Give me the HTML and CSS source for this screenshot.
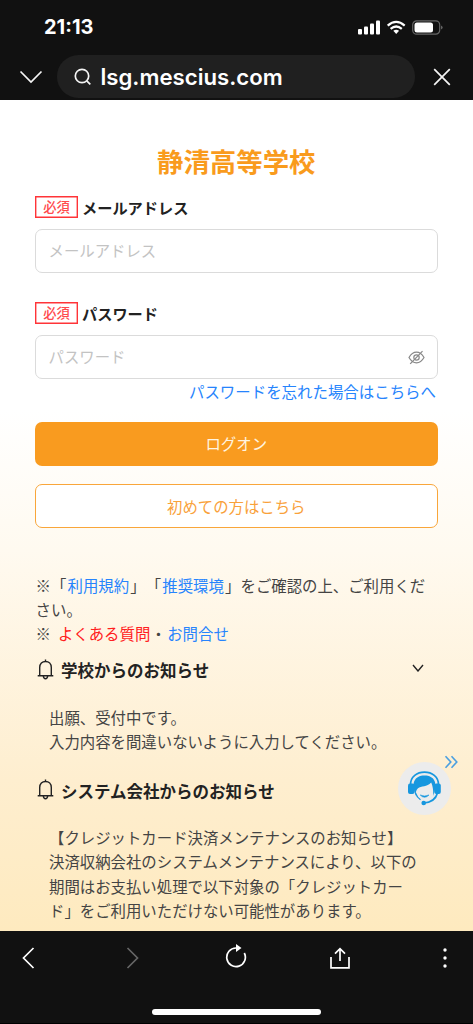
FILE: index.html
```html
<!DOCTYPE html>
<html lang="ja">
<head>
<meta charset="utf-8">
<meta name="viewport" content="width=device-width, initial-scale=1">
<title>静清高等学校</title>
<link rel="stylesheet" href="styles.css">
</head>
<body>
<div class="screen">
  <header class="browser-top">
    <div class="status">
      <span class="clock">21:13</span>
      <svg class="status-icons" width="86" height="16" viewBox="0 0 86 16">
        <g fill="#fff">
          <rect x="0" y="9" width="4" height="5.500" rx="1"/><rect x="6" y="6.500" width="4" height="8" rx="1"/><rect x="12" y="3.500" width="4" height="11" rx="1"/><rect x="18" y="0.500" width="4" height="14" rx="1"/>
          <path d="M35.300 10.800Q38.200 8.700 41.100 10.800L38.200 14Z"/>
          <rect x="56.500" y="2.500" width="18.500" height="10" rx="2.500"/>
        </g>
        <g fill="none" stroke="#fff" stroke-width="2.200"><path d="M29.700 5.600Q38.200-1.900 46.700 5.600"/><path d="M32.600 8.900Q38.200 4.100 43.800 8.900"/></g>
        <rect x="54.700" y=".8" width="27" height="13.400" rx="4" fill="none" stroke="#666" stroke-width="1.200"/>
        <path d="M83.200 5.500Q86 7.500 83.200 9.500Z" fill="#777"/>
      </svg>
    </div>
    <div class="address-row">
      <svg class="chevron" width="24" height="14" viewBox="0 0 24 14"><path d="M1.500 1.500L12 12L22.500 1.500"/></svg>
      <div class="address">
        <svg width="18" height="18" viewBox="0 0 18 18"><circle cx="8" cy="8" r="6.700"/><path d="M12.800 12.800L16.300 16.300"/></svg>
        <span>lsg.mescius.com</span>
      </div>
      <svg class="close" width="18" height="18" viewBox="0 0 18 18"><path d="M1.200 1.200L16.800 16.800M16.800 1.200L1.200 16.800"/></svg>
    </div>
  </header>

  <main class="page">
    <h1 class="school">静清高等学校</h1>
    <form class="login">
      <div class="label"><span class="required">必須</span><span>メールアドレス</span></div>
      <div class="field">メールアドレス</div>
      <div class="label second"><span class="required">必須</span><span>パスワード</span></div>
      <div class="field"><span>パスワード</span>
        <svg class="eye" width="17" height="15" viewBox="0 0 17 15"><path d="M1 7.500C3.200 3.600 5.600 2.200 8.500 2.200S13.800 3.600 16 7.500C13.800 11.400 11.400 12.800 8.500 12.800S3.200 11.400 1 7.500Z"/><circle cx="8.500" cy="7.500" r="2.700"/><path d="M2.200 13.800L14.500 1.200"/></svg>
      </div>
      <a class="forgot">パスワードを忘れた場合はこちらへ</a>
      <div class="button primary">ログオン</div>
      <div class="button outline">初めての方はこちら</div>
    </form>
    <p class="terms">※「<a>利用規約</a>」「<a>推奨環境</a>」をご確認の上、ご利用くだ<br>さい。<br>※ <a class="faq">よくある質問</a>・<a>お問合せ</a></p>

    <section class="notice">
      <h2><svg class="bell" width="17" height="21" viewBox="0 0 17 21"><path d="M2.700 16.500V8.500C2.700 4.800 5.200 2.500 8.500 2.500S14.300 4.800 14.300 8.500V16.500M.7 16.700H16.300M8.500.5V2.500M6.300 17.200Q6.600 19.700 8.500 19.700T10.700 17.200"/></svg><span>学校からのお知らせ</span>
        <svg class="expand" width="12" height="8" viewBox="0 0 12 8"><path d="M1 1L6 7L11 1"/></svg></h2>
      <p>出願、受付中です。<br>入力内容を間違いないように入力してください。</p>
    </section>
    <section class="notice company">
      <h2><svg class="bell" width="17" height="21" viewBox="0 0 17 21"><path d="M2.700 16.500V8.500C2.700 4.800 5.200 2.500 8.500 2.500S14.300 4.800 14.300 8.500V16.500M.7 16.700H16.300M8.500.5V2.500M6.300 17.200Q6.600 19.700 8.500 19.700T10.700 17.200"/></svg><span>システム会社からのお知らせ</span></h2>
      <p>【クレジットカード決済メンテナンスのお知らせ】<br>決済収納会社のシステムメンテナンスにより、以下の<br>期間はお支払い処理で以下対象の「クレジットカー<br>ド」をご利用いただけない可能性があります。</p>
    </section>
    <div class="support">
      <svg width="60" height="60" viewBox="0 0 60 60">
        <circle cx="26.500" cy="33.500" r="26.500" fill="#ececec"/>
        <path d="M47.500 1.200L52.800 7L47.500 12.800M53.500 1.200L58.800 7L53.500 12.800" fill="none" stroke="#4a9fe0" stroke-width="1.600"/>
        <path d="M12.500 30C12 12.800 41 12.800 40.500 30" fill="none" stroke="#1697df" stroke-width="1.700"/>
        <path d="M18 41C12.500 28 16.500 20.500 26.500 20.500S40.500 28 35 41C35.800 36 34.500 30.500 33.200 27.600C29 32 23 31 20 33.300C18 35 17.500 37.500 18 41Z" fill="#1697df"/>
        <rect x="10" y="28.500" width="6.500" height="10.500" rx="2" fill="#1697df"/><rect x="36.300" y="28.500" width="6.500" height="10.500" rx="2" fill="#1697df"/>
        <path d="M39.500 38Q37 47 26 48" fill="none" stroke="#1697df" stroke-width="1.700"/><circle cx="25.700" cy="48" r="2.300" fill="#1697df"/>
        <path d="M22.200 40Q26.500 44.500 31 40Q26.500 42 22.200 40Z" fill="#1697df" stroke="#1697df" stroke-width=".6"/>
        <path d="M17.500 38Q19 42.500 22.500 44.800" fill="none" stroke="#1697df" stroke-width="1.300"/>
      </svg>
    </div>
  </main>

  <footer class="browser-bottom">
    <nav>
      <svg width="13" height="22" viewBox="0 0 13 22"><path d="M11.500 1L1.500 11L11.500 21"/></svg>
      <svg class="forward" width="13" height="22" viewBox="0 0 13 22"><path d="M1.500 1L11.500 11L1.500 21"/></svg>
      <svg class="reload" width="22" height="24" viewBox="0 0 22 24"><path d="M11.500 4H11A9.300 9.300 0 1 0 19.300 9"/><path class="solid" d="M11 0L16.500 4L11 8Z"/></svg>
      <svg class="share" width="20" height="22" viewBox="0 0 20 22"><path d="M1 10V20.800H19V10M10 14V2M5 6.700L10 1.700L15 6.700"/></svg>
      <svg class="more" width="4" height="20" viewBox="0 0 4 20"><g class="solid"><circle cx="2" cy="2" r="1.700"/><circle cx="2" cy="10" r="1.700"/><circle cx="2" cy="18" r="1.700"/></g></svg>
    </nav>
    <div class="home"></div>
  </footer>
</div>
</body>
</html>
```
FILE: styles.css
```css
* { box-sizing: border-box; }
body { margin: 0; background: #111; font-family: "Noto Sans CJK JP", sans-serif; text-spacing-trim: space-all; }
svg { display: block; flex: none; }
h1, h2, p { margin: 0; }
.screen { width: 473px; height: 1024px; display: flex; flex-direction: column; overflow: hidden; }

.browser-top { height: 100px; flex: none; background: #111; color: #fff; }
.status { height: 55px; display: flex; justify-content: space-between; padding: 0 29px 0 44px; }
.clock { font: 700 20px/54px Inter, sans-serif; }
.status-icons { margin-top: 19.500px; }
.address-row { height: 43px; display: flex; align-items: center; padding-left: 19px; }
.chevron, .close { fill: none; stroke: #f5f5f5; stroke-width: 1.700; }
.address { width: 358px; height: 43px; margin: 0 18px 0 14px; padding-left: 16.500px; border-radius: 22px; background: #202020; display: flex; align-items: center; gap: 9px; font: 600 22.200px/43px Inter, sans-serif; }
.address svg { fill: none; stroke: #f5f5f5; stroke-width: 1.700; }

.page { position: relative; height: 831px; flex: none; padding: 43px 35.500px 0 35px; background: linear-gradient(#fff 0, #fff 310px, #fffaf0 450px, #feeecf 680px, #feeabf 830px); color: #444; font-size: 15.400px; line-height: 24.400px; white-space: nowrap; }
.school { height: 36px; text-align: center; color: #f99b1d; font-size: 26.400px; font-weight: 700; line-height: 36px; }
.label { display: flex; align-items: center; gap: 4px; height: 22px; margin-top: 17px; color: #222; font-weight: 700; font-size: 15.200px; }
.required { width: 43px; height: 22px; box-shadow: inset 0 0 0 1.400px #ff3438; color: #ff4a4d; font-size: 13.300px; font-weight: 500; line-height: 21px; text-align: center; }
.field { display: flex; align-items: center; justify-content: space-between; height: 44px; margin-top: 11px; padding: 0 12px 2px 12.500px; border: 1px solid #dbdbdb; border-radius: 7px; background: #fff; color: #c3c3c3; }
.label.second { margin-top: 29px; }
.eye { fill: none; stroke: #888; stroke-width: 1.200; margin-top: 2px; }
.forgot { display: block; margin-right: 1.500px; text-align: right; font-size: 15.450px; }
a { color: #2684fd; }
.button { height: 44px; border-radius: 7px; text-align: center; line-height: 42px; }
.primary { margin-top: 18.600px; background: #f99b1f; color: #fff4e0; line-height: 43px; }
.outline { margin-top: 18px; border: 1px solid #f9a63a; background: #fff; color: #f9a13a; }
.terms { margin-top: 44.500px; padding-left: .6px; }
.terms a { margin: 0 1.200px; }
.terms .faq { margin-left: 3.500px; margin-right: .5px; }
.terms .faq + a { margin-left: 1px; }
.terms .faq { color: #ff2020; }
.notice { margin-top: 12.500px; }
.notice h2 { display: flex; align-items: center; height: 24px; padding: 0 19px 0 1.500px; gap: 7.500px; color: #222; font-size: 16.500px; line-height: 24px; font-weight: 700; }
.bell, .expand { fill: none; stroke: #222; stroke-width: 1.400; }
.bell { margin-top: -2px; }
.expand { margin: -4px -5px 0 auto; }
.notice p { margin: 22.500px 0 0 14px; }
.notice.company { margin-top: 25px; }
.support { position: absolute; left: 398px; top: 655px; }

.browser-bottom { flex: 1; background: #111; border-bottom: 1px solid #000; }
nav { display: flex; align-items: center; height: 53px; padding: 0 26px 0 21.500px; }
nav svg { fill: none; stroke: #fff; stroke-width: 1.700; }
nav svg .solid { fill: #fff; stroke: none; }
nav .forward { margin-left: 91px; stroke: #666; }
nav .reload { margin-left: 86.500px; margin-top: -3px; }
nav .share { margin-left: 83px; }
nav .more { margin-left: auto; }
.home { width: 169px; height: 6px; margin: 25px auto 0; border-radius: 3px; background: #fff; }
```
